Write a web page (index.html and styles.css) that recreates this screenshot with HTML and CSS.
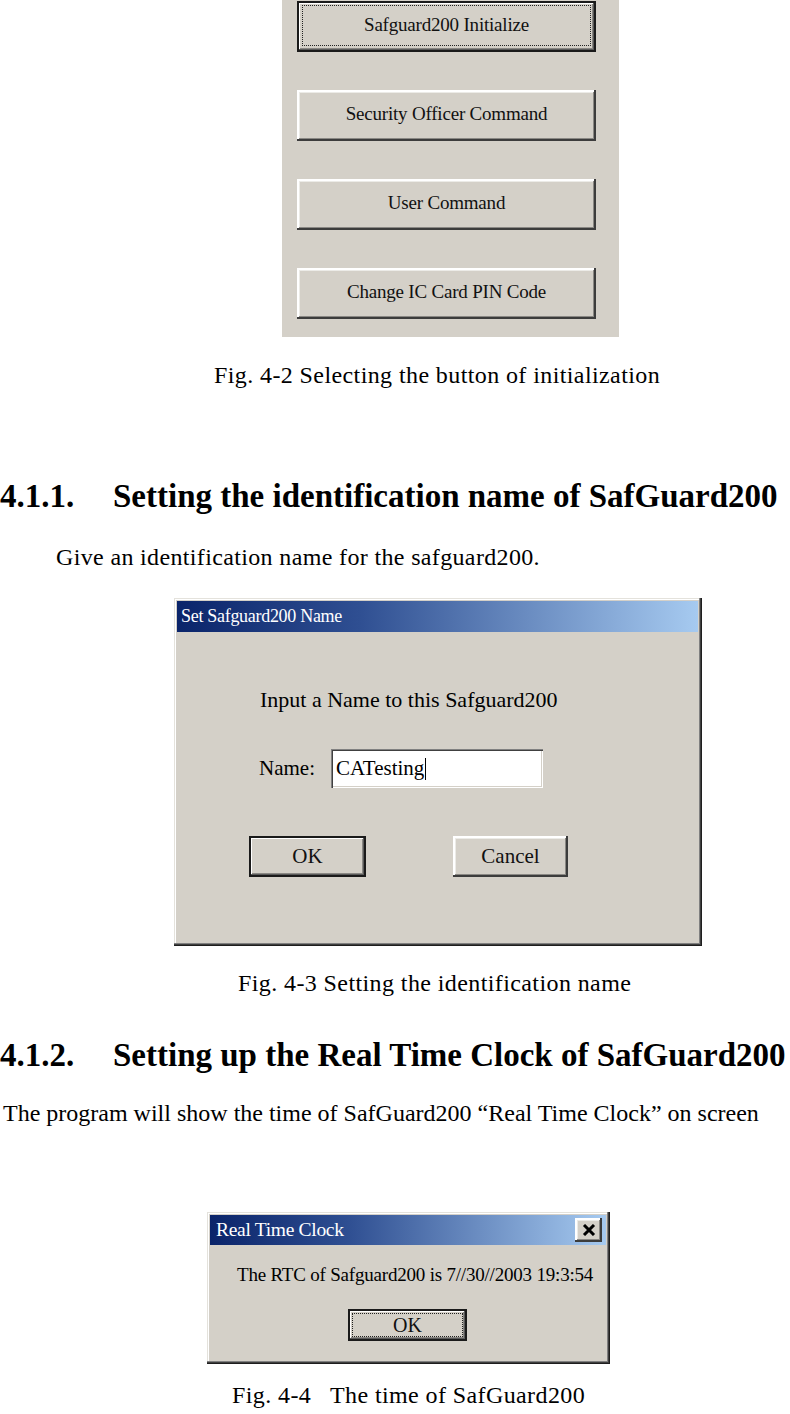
FILE: index.html
```html
<!DOCTYPE html>
<html>
<head>
<meta charset="utf-8">
<link rel="stylesheet" href="styles.css">
</head>
<body>
<div class="page">
  <div class="panel">
    <div class="wbtn wbtn-default big"><span class="focus">Safguard200 Initialize</span></div>
    <div class="wbtn big">Security Officer Command</div>
    <div class="wbtn big">User Command</div>
    <div class="wbtn big">Change IC Card PIN Code</div>
  </div>
  <p class="caption cap1">Fig. 4-2 Selecting the button of initialization</p>

  <h2 class="heading h1"><span class="num">4.1.1.</span><span>Setting the identification name of SafGuard200</span></h2>
  <p class="para para1">Give an identification name for the safguard200.</p>

  <div class="window win1">
    <div class="titlebar"><span class="title">Set Safguard200 Name</span></div>
    <div class="win1-body">
      <div class="prompt">Input a Name to this Safguard200</div>
      <div class="name-row">
        <span class="label">Name:</span>
        <div class="input"><span>CATesting</span><span class="caret"></span></div>
      </div>
      <div class="btn-row">
        <div class="wbtn wbtn-default okbtn">OK</div>
        <div class="wbtn cancelbtn">Cancel</div>
      </div>
    </div>
  </div>
  <p class="caption cap2">Fig. 4-3 Setting the identification name</p>

  <h2 class="heading h2"><span class="num">4.1.2.</span><span>Setting up the Real Time Clock of SafGuard200</span></h2>
  <p class="para para2">The program will show the time of SafGuard200 “Real Time Clock” on screen</p>

  <div class="window win2">
    <div class="titlebar">
      <span class="title title2">Real Time Clock</span>
      <div class="wbtn closebtn">
        <svg width="14" height="12" viewBox="0 0 14 12"><path d="M2 1 L12 11 M12 1 L2 11" stroke="#000" stroke-width="3" fill="none"/></svg>
      </div>
    </div>
    <div class="msg">The RTC of Safguard200 is 7//30//2003 19:3:54</div>
    <div class="wbtn wbtn-default okbtn2"><span class="focus">OK</span></div>
  </div>
  <p class="caption cap3">Fig. 4-4&nbsp;&nbsp; The time of SafGuard200</p>
</div>
</body>
</html>
```

FILE: styles.css
```css
* { box-sizing: border-box; }
html, body { margin: 0; padding: 0; background: #fff; }
body { font-family: "Liberation Serif", "Times New Roman", serif; color: #000; }
.page { width: 790px; height: 1414px; overflow: hidden; }

/* Classic Windows button */
.wbtn {
  background: #d4d0c8;
  display: flex;
  align-items: center;
  justify-content: center;
  font-family: "Liberation Serif", serif;
  color: #111;
  box-shadow: inset -2px -2px #3c3c3c, inset 2px 2px #ffffff, inset -3px -3px #8a8884, inset 3px 3px #ecebe7;
}
.wbtn-default {
  box-shadow: inset 0 0 0 2px #1a1a1a, inset -3px -3px #5a5a5a, inset 3px 3px #ffffff, inset -4px -4px #8a8884;
}
.focus {
  display: flex;
  align-items: center;
  justify-content: center;
  outline: 1px dotted #222;
}

/* Figure 4-2 panel */
.panel {
  margin-left: 282px;
  width: 337px;
  height: 337px;
  background: #d4d0c8;
  padding: 1px 0 0 15px;
  display: flex;
  flex-direction: column;
  gap: 38px;
}
.big { width: 299px; height: 51px; font-size: 19px; letter-spacing: -0.2px; padding-bottom: 3px; }
.big .focus { width: 287px; height: 39px; }

.caption { margin: 0; font-size: 24px; line-height: 28px; letter-spacing: 0.4px; white-space: nowrap; }
.cap1 { margin-top: 24px; padding-left: 214px; }
.cap2 { margin-top: 23px; padding-left: 238px; }
.cap3 { margin-top: 17px; padding-left: 232px; }

.heading {
  margin: 0;
  font-size: 33px;
  line-height: 38px;
  font-weight: bold;
  display: flex;
  white-space: nowrap;
}
.heading .num { width: 113px; }
.h1 { margin-top: 88px; }
.h2 { margin-top: 39px; }

.para { margin: 0; font-size: 24px; line-height: 28px; white-space: nowrap; }
.para1 { margin-top: 28px; padding-left: 56px; letter-spacing: 0.35px; }
.para2 { margin-top: 25px; padding-left: 3px; }

/* Windows */
.window {
  background: #d4d0c8;
  padding: 3px 4px 4px 3px;
  box-shadow: inset -1px -1px #1e1e1e, inset -2px -2px #3e3e3e, inset -3px -3px #808080, inset 1px 1px #e4e2dc, inset 2px 2px #ffffff;
}
.titlebar {
  display: flex;
  align-items: center;
  justify-content: space-between;
  background: linear-gradient(to right, #0a246a 0%, #2f4f92 35%, #a6caf0 100%);
  color: #fff;
  padding-left: 4px;
}
.title { font-size: 18px; letter-spacing: -0.3px; }
.title2 { font-size: 19.5px; padding-left: 2px; }

.win1 { margin-top: 27px; margin-left: 174px; width: 528px; height: 348px; }
.win1 .titlebar { height: 31px; }
.win1-body { padding-left: 72px; }
.prompt { margin-top: 56px; padding-left: 11px; font-size: 22px; line-height: 24px; }
.name-row { margin-top: 37px; display: flex; align-items: center; padding-left: 10px; height: 39px; }
.label { font-size: 21px; width: 72px; }
.input {
  width: 212px;
  height: 39px;
  background: #fff;
  display: flex;
  align-items: center;
  padding-left: 5px;
  font-size: 21px;
  box-shadow: inset 1px 1px #808080, inset 2px 2px #404040, inset -1px -1px #ffffff, inset -2px -2px #d4d0c8;
}
.caret { width: 1px; height: 22px; background: #000; margin-left: 1px; }
.btn-row { margin-top: 48px; display: flex; gap: 87px; }
.okbtn { width: 117px; height: 41px; font-size: 21px; }
.cancelbtn { width: 115px; height: 41px; font-size: 21px; }

.win2 { margin-top: 85px; margin-left: 207px; width: 403px; height: 152px; }
.win2 .titlebar { height: 30px; padding-right: 4px; }
.closebtn { width: 27px; height: 24px; }
.msg { margin-top: 18px; padding-left: 27px; font-size: 19px; line-height: 24px; white-space: nowrap; letter-spacing: -0.2px; }
.okbtn2 { margin-top: 22px; margin-left: 138px; width: 119px; height: 32px; font-size: 20px; }
.okbtn2 .focus { width: 109px; height: 22px; }
```
